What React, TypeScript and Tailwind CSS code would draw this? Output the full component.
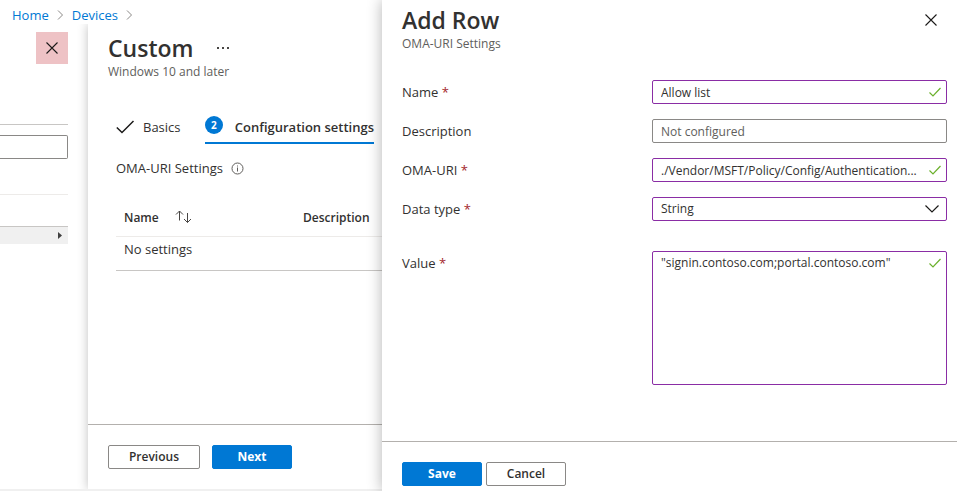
import type { ReactNode } from "react";

const FONT = "font-['Open_Sans','Noto_Sans',sans-serif]";

function CloseIcon() {
  return (
    <svg width="12" height="12" viewBox="0 0 12 12" fill="none" stroke="#1b1a19" strokeWidth="1.1" aria-hidden="true">
      <path d="M0.5 0.5l11 11M11.5 0.5l-11 11" />
    </svg>
  );
}

function Crumb({ children }: { children: ReactNode }) {
  return (
    <li className="flex items-center gap-2">
      <a href="#" className="text-[#0078d4]">{children}</a>
      <svg width="7" height="10" viewBox="0 0 7 10" fill="none" stroke="#8a8886" aria-hidden="true">
        <path d="M1 0.5L5.5 5L1 9.5" />
      </svg>
    </li>
  );
}

function ValidMark() {
  return (
    <svg className="pointer-events-none absolute top-1.5 right-1.5" width="12" height="12" viewBox="0 0 12 12" fill="none" stroke="#6bb02c" strokeWidth="1.2" aria-hidden="true">
      <path d="M0.5 6.5L4 10L11.5 2" />
    </svg>
  );
}

function Field({ id, label, required, children }: { id: string; label: string; required?: boolean; children: ReactNode }) {
  return (
    <div className="flex items-start">
      <label htmlFor={id} className="w-[250px] shrink-0 leading-6">
        {label}
        {required && <span className="text-[#a4262c]"> *</span>}
      </label>
      <div className="relative min-w-0 flex-1">{children}</div>
    </div>
  );
}

const box = "block w-full rounded-xs border bg-white pl-2 text-xs outline-none text-[#323130]";

function Button({ primary, wide, children }: { primary?: boolean; wide?: boolean; children: ReactNode }) {
  const tone = primary ? "border-[#0078d4] bg-[#0078d4] font-bold text-white" : "border-[#8a8886] bg-white font-semibold";
  return (
    <button type="button" className={`flex h-6 items-center justify-center rounded-xs border text-xs ${wide ? "w-[92px]" : "w-20"} ${tone}`}>
      {children}
    </button>
  );
}

function BackBlade() {
  return (
    <div className="w-[88px] shrink-0 pt-2 pr-5">
      <button type="button" aria-label="Close" className="ml-auto flex size-8 items-center justify-center bg-[#eec2c5]">
        <CloseIcon />
      </button>
      <div className="mt-[60px] border-t border-[#c8c6c4] pt-2.5">
        <input aria-label="Search" className="block h-6 w-full rounded-r-xs border border-l-0 border-[#8a8886] outline-none" />
      </div>
      <div className="mt-[35px] h-8 border-t border-[#edebe9]" />
      <div className="flex h-[18px] items-center justify-end border-t border-[#c8c6c4] bg-[#f0f0f0] pr-1.5">
        <svg width="4" height="7" viewBox="0 0 4 7" fill="#404040" aria-hidden="true">
          <path d="M0 0L4 3.5L0 7z" />
        </svg>
      </div>
    </div>
  );
}

function CustomBlade() {
  return (
    <section className="flex min-w-0 flex-1 flex-col bg-white shadow-[0_0_10px_rgba(0,0,0,0.25)] [clip-path:inset(0_0_0_-16px)]">
      <header className="px-5 pt-2.5">
        <div className="flex h-7 items-center gap-6">
          <h1 className="text-[23px] leading-7 font-semibold">Custom</h1>
          <button type="button" aria-label="More">
            <svg width="12" height="2" viewBox="0 0 12 2" fill="#484644" aria-hidden="true">
              <path d="M0 0h2v2H0zM5 0h2v2H5zM10 0h2v2h-2z" />
            </svg>
          </button>
        </div>
        <p className="mt-0.5 text-xs leading-4 text-[#605e5c]">Windows 10 and later</p>
      </header>
      <div className="flex-1 pt-[34px] pl-7">
        <div role="tablist" className="flex h-[30px] pr-2 whitespace-nowrap">
          <button type="button" role="tab" aria-selected="false" className="flex h-[26px] items-center gap-2">
            <svg width="19" height="14" viewBox="0 0 19 14" fill="none" stroke="#1b1a19" strokeWidth="1.5" aria-hidden="true">
              <path d="M0.8 7.5L6 12.5L17.500 1" />
            </svg>
            Basics
          </button>
          <button type="button" role="tab" aria-selected="true" className="ml-auto flex items-start gap-3 border-b-2 border-[#0078d4] pt-0.5 font-semibold">
            <span className="flex size-[18px] items-center justify-center rounded-full bg-[#0078d4] text-[10px] font-bold text-white">2</span>
            <span className="leading-[22px]">Configuration settings</span>
          </button>
        </div>
        <div className="mt-4 flex h-4 items-center gap-2">
          <h2>OMA-URI Settings</h2>
          <svg width="13" height="13" viewBox="0 0 13 13" fill="none" stroke="#605e5c" aria-hidden="true">
            <circle cx="6.5" cy="6.5" r="5.5" />
            <path d="M6.5 5.5v4M6.5 3.5v1" />
          </svg>
        </div>
        <table className="mt-6 w-full border-collapse text-left">
          <thead>
            <tr className="h-9 border-b border-[#edebe9] text-xs">
              <th className="pl-2 font-semibold">
                <span className="flex items-start gap-4">
                  Name
                  <svg width="17" height="14" viewBox="0 0 17 14" fill="none" stroke="#484644" aria-hidden="true">
                    <path d="M4.5 10.500V1M1 4.500L4.500 1L8 4.500M12.500 3v9.500M9 9L12.500 12.500L16 9" />
                  </svg>
                </span>
              </th>
              <th className="w-[79px] font-semibold">Description</th>
            </tr>
          </thead>
          <tbody>
            <tr className="h-[34px] border-b border-[#c8c6c4]">
              <td colSpan={2} className="pb-2 pl-2">No settings</td>
            </tr>
          </tbody>
        </table>
      </div>
      <footer className="flex h-[65px] gap-3 border-t border-[#b3b0ad] px-5 pt-5">
        <Button wide>Previous</Button>
        <Button primary>Next</Button>
      </footer>
    </section>
  );
}

function AddRowBlade() {
  return (
    <section className="z-10 flex min-w-0 flex-1 flex-col bg-white shadow-[0_0_14px_rgba(0,0,0,0.3)]">
      <header className="flex items-start justify-between pt-1.5 pr-5 pl-5">
        <div>
          <h1 className="text-[23px] leading-7 font-semibold">Add Row</h1>
          <p className="mt-0.5 text-xs leading-4 text-[#605e5c]">OMA-URI Settings</p>
        </div>
        <button type="button" aria-label="Close" className="mt-2">
          <CloseIcon />
        </button>
      </header>
      <form className="flex flex-1 flex-col gap-[15px] pt-7 pr-2.5 pl-5">
        <Field id="name" label="Name" required>
          <input id="name" defaultValue="Allow list" className={`${box} h-6 border-[#8a2da5] pr-5`} />
          <ValidMark />
        </Field>
        <Field id="description" label="Description">
          <input id="description" placeholder="Not configured" className={`${box} h-6 border-[#8a8886] placeholder:text-[#605e5c]`} />
        </Field>
        <Field id="uri" label="OMA-URI" required>
          <input id="uri" defaultValue="./Vendor/MSFT/Policy/Config/Authentication..." className={`${box} h-6 border-[#8a2da5] pr-[18px]`} />
          <ValidMark />
        </Field>
        <Field id="type" label="Data type" required>
          <select id="type" className={`${box} h-6 appearance-none border-[#8a2da5] pr-7`}>
            <option>String</option>
          </select>
          <svg className="pointer-events-none absolute top-2 right-2" width="14" height="8" viewBox="0 0 14 8" fill="none" stroke="#1b1a19" strokeWidth="1.2" aria-hidden="true">
            <path d="M0.5 0.5L7 7L13.5 0.5" />
          </svg>
        </Field>
        <div className="pt-[15px]">
          <Field id="value" label="Value" required>
            <textarea id="value" defaultValue={'"signin.contoso.com;portal.contoso.com"'} className={`${box} h-[134px] resize-none border-[#8a2da5] pt-0.5 pr-6 leading-[18px]`} />
            <ValidMark />
          </Field>
        </div>
      </form>
      <footer className="flex h-[50px] gap-1 border-t border-[#b3b0ad] px-5 pt-5">
        <Button primary>Save</Button>
        <Button>Cancel</Button>
      </footer>
    </section>
  );
}

export default function App() {
  return (
    <main className={`${FONT} flex h-screen overflow-hidden bg-white text-[13px] leading-4 text-[#323130]`}>
      <div className="flex w-[382px] shrink-0 flex-col border-b-2 border-[#f0f0f0]">
        <nav aria-label="Breadcrumb" className="h-6 pt-1.5 pl-3">
          <ol className="flex gap-2 leading-[18px]">
            <Crumb>Home</Crumb>
            <Crumb>Devices</Crumb>
          </ol>
        </nav>
        <div className="flex min-h-0 flex-1">
          <BackBlade />
          <CustomBlade />
        </div>
      </div>
      <AddRowBlade />
    </main>
  );
}
